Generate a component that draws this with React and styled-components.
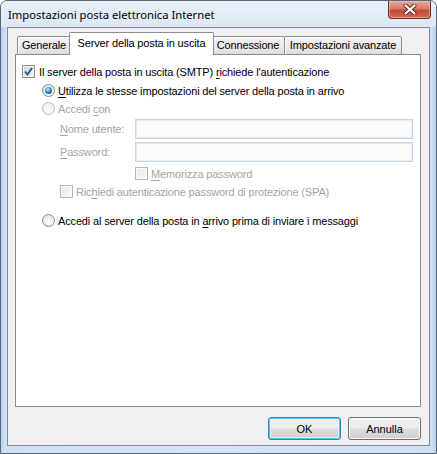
import React from 'react';
import styled, { createGlobalStyle } from 'styled-components';

const GlobalStyle = createGlobalStyle`
  html, body { margin: 0; padding: 0; background: #fff; }
  body { font-family: "Liberation Sans", Arial, sans-serif; font-size: 11px; }
`;

// title bar uses the Segoe-like face, dialog content the Tahoma-like one
const TITLE_FONT = `"Noto Sans", "Open Sans", sans-serif`;
const FONT = `"Liberation Sans", Arial, sans-serif`;

const Window = styled.div`
  width: 437px;
  height: 454px;
  box-sizing: border-box;
  border: 1px solid #56687a;
  border-radius: 7px 7px 0 0;
  background: linear-gradient(90deg, #b9d1ec 0px, #cfe0f2 4px, #d6e5f4 50%, #cfe0f2 calc(100% - 4px), #b9d1ec 100%);
  display: flex;
  flex-direction: column;
  overflow: hidden;
`;

const TitleBar = styled.div`
  height: 26px;
  display: flex;
  justify-content: space-between;
  background: linear-gradient(180deg, #e9f0f8 0%, #dde8f4 100%);
  padding-left: 7px;
  padding-right: 5px;
`;

const Title = styled.div`
  font-family: ${TITLE_FONT};
  font-size: 11.25px;
  color: #000;
  align-self: center;
`;

const CloseButton = styled.div`
  width: 43px;
  height: 18px;
  box-sizing: border-box;
  border: 1px solid #6e2a20;
  border-top: none;
  border-radius: 0 0 4px 4px;
  background: linear-gradient(180deg, #e6a99c 0%, #d77a68 45%, #c24a33 55%, #d4694f 100%);
  box-shadow: inset 0 0 0 1px rgba(255, 210, 200, 0.5);
  display: flex;
  align-items: center;
  justify-content: center;
`;

const Client = styled.div`
  flex: 1;
  margin: 0 6px 7px 6px;
  border: 1px solid #7d8a98;
  background: #f0f0f0;
  display: flex;
  flex-direction: column;
  padding: 5px 8px 5px 7px;
`;

const TabStrip = styled.div`
  display: flex;
  align-items: flex-end;
  height: 22px;
  padding-left: 2px;
  margin-bottom: -1px;
`;

const Tab = styled.div`
  box-sizing: border-box;
  width: ${p => p.$w}px;
  height: ${p => (p.$active ? '23px' : '19px')};
  margin: 0 ${p => (p.$active ? '-2px' : '0')} 0 ${p => (p.$active ? '-2px' : '-1px')};
  padding-top: ${p => (p.$active ? '4px' : '2px')};
  text-align: center;
  border: 1px solid #898c95;
  border-bottom: ${p => (p.$active ? 'none' : '1px solid #898c95')};
  border-radius: 2px 2px 0 0;
  background: ${p => (p.$active ? '#fff' : 'linear-gradient(180deg, #f4f4f4 0%, #ebebeb 50%, #dedede 100%)')};
  box-shadow: ${p => (p.$active ? 'none' : 'inset 1px 1px 0 #fff')};
  font-family: ${FONT};
  font-size: 11px;
  letter-spacing: -0.15px;
  color: #000;
  white-space: nowrap;
  position: relative;
  z-index: ${p => (p.$active ? 2 : 1)};
  &:first-child { margin-left: 0; }
`;

const Panel = styled.div`
  height: 351px;
  border: 1px solid #898c95;
  background: #fff;
  display: flex;
  flex-direction: column;
`;

const Row = styled.div`
  display: flex;
  align-items: center;
  height: ${p => p.$h || 13}px;
  margin-top: ${p => p.$mt}px;
  padding-left: ${p => p.$pl}px;
  gap: ${p => (p.$gap != null ? p.$gap : 4)}px;
`;

const Label = styled.span`
  font-family: ${FONT};
  font-size: 11px;
  letter-spacing: -0.15px;
  color: ${p => (p.$disabled ? '#a3a3a3' : '#000')};
  white-space: nowrap;
  width: ${p => (p.$w ? `${p.$w}px` : 'auto')};
  flex-shrink: 0;
  u { text-decoration: underline; text-underline-offset: 2px; }
`;

const Box = styled.span`
  width: 13px;
  height: 13px;
  box-sizing: border-box;
  flex-shrink: 0;
  border: 1px solid ${p => (p.$disabled ? '#b7b7b7' : '#8e8f8f')};
  background: ${p => (p.$disabled
    ? 'linear-gradient(135deg, #ebebeb 0%, #f7f7f7 100%)'
    : 'linear-gradient(135deg, #cbd3e0 0%, #f2f4f8 100%)')};
  box-shadow: inset 0 0 0 1px ${p => (p.$disabled ? '#fbfbfb' : '#f4f4f4')};
  display: flex;
  align-items: center;
  justify-content: center;
`;

const Radio = styled.span`
  width: 13px;
  height: 13px;
  box-sizing: border-box;
  flex-shrink: 0;
  border-radius: 50%;
  border: 1px solid ${p => (p.$disabled ? '#bcbcbc' : '#8a8a8a')};
  background: ${p => (p.$disabled
    ? 'radial-gradient(circle at 60% 65%, #fdfdfd 0%, #eaeaea 100%)'
    : 'radial-gradient(circle at 60% 65%, #ffffff 0%, #d8dde4 100%)')};
  display: flex;
  align-items: center;
  justify-content: center;
`;

const Dot = styled.span`
  width: 7px;
  height: 7px;
  border-radius: 50%;
  background: radial-gradient(circle at 40% 35%, #bfefff 0%, #4aa8e8 35%, #1b4f9e 75%, #0f2f66 100%);
`;

const Field = styled.div`
  width: 278px;
  height: 20px;
  box-sizing: border-box;
  border: 1px solid #c8d4e0;
  box-shadow: inset 0 0 0 1px #e6ecf2;
  background: #fcfcfc;
`;

const Footer = styled.div`
  flex: 1;
  display: flex;
  justify-content: flex-end;
  align-items: flex-end;
  gap: 7px;
`;

const Button = styled.div`
  width: 73px;
  height: 23px;
  box-sizing: border-box;
  border: 1px solid ${p => (p.$default ? '#3c7fb1' : '#707070')};
  border-radius: 3px;
  background: linear-gradient(180deg, #f2f2f2 0%, #ebebeb 48%, #dddddd 52%, #cfcfcf 100%);
  box-shadow: ${p => (p.$default
    ? 'inset 0 0 0 1px #48c8f0, inset 0 0 0 2px rgba(255,255,255,0.5)'
    : 'inset 0 0 0 1px rgba(255,255,255,0.8)')};
  display: flex;
  align-items: center;
  justify-content: center;
  font-family: ${FONT};
  font-size: 11px;
  color: #000;
`;

const Check = ({ disabled }) => (
  <Box $disabled={disabled}>
    {!disabled && (
      <svg width="9" height="9" viewBox="0 0 9 9">
        <path d="M1 4.5 L3.5 7.5 L8 1" fill="none" stroke="#2d4f8e" strokeWidth="1.8" />
      </svg>
    )}
  </Box>
);

const RadioBtn = ({ checked, disabled }) => (
  <Radio $disabled={disabled}>{checked && <Dot />}</Radio>
);

export default function App() {
  return (
    <>
      <GlobalStyle />
      <Window>
        <TitleBar>
          <Title>Impostazioni posta elettronica Internet</Title>
          <CloseButton>
            <svg width="14" height="11" viewBox="0 0 14 11">
              <path d="M2.5 1.5 L11.5 9.5 M11.5 1.5 L2.5 9.5" stroke="#5a2a22" strokeWidth="4" strokeLinecap="round" />
              <path d="M2.5 1.5 L11.5 9.5 M11.5 1.5 L2.5 9.5" stroke="#fff" strokeWidth="2.2" strokeLinecap="round" />
            </svg>
          </CloseButton>
        </TitleBar>
        <Client>
          <TabStrip>
            <Tab $w={54}>Generale</Tab>
            <Tab $active $w={145}>Server della posta in uscita</Tab>
            <Tab $w={74}>Connessione</Tab>
            <Tab $w={118}>Impostazioni avanzate</Tab>
          </TabStrip>
          <Panel>
            <Row $mt={10} $pl={6}>
              <Check />
              <Label>Il server della posta in uscita (SMTP) <u>r</u>ichiede l'autenticazione</Label>
            </Row>
            <Row $mt={6} $pl={26} $gap={3}>
              <RadioBtn checked />
              <Label><u>U</u>tilizza le stesse impostazioni del server della posta in arrivo</Label>
            </Row>
            <Row $mt={5} $pl={26} $gap={3}>
              <RadioBtn disabled />
              <Label $disabled>Accedi <u>c</u>on</Label>
            </Row>
            <Row $h={20} $mt={4} $pl={44} $gap={0}>
              <Label $disabled $w={75}><u>N</u>ome utente:</Label>
              <Field />
            </Row>
            <Row $h={20} $mt={3} $pl={44} $gap={0}>
              <Label $disabled $w={75}><u>P</u>assword:</Label>
              <Field />
            </Row>
            <Row $mt={5} $pl={119} $gap={3}>
              <Check disabled />
              <Label $disabled><u>M</u>emorizza password</Label>
            </Row>
            <Row $mt={5} $pl={44} $gap={3}>
              <Check disabled />
              <Label $disabled>Ric<u>h</u>iedi autenticazione password di protezione (SPA)</Label>
            </Row>
            <Row $mt={16} $pl={26} $gap={3}>
              <RadioBtn />
              <Label>Accedi al server della posta in <u>a</u>rrivo prima di inviare i messaggi</Label>
            </Row>
          </Panel>
          <Footer>
            <Button $default>OK</Button>
            <Button>Annulla</Button>
          </Footer>
        </Client>
      </Window>
    </>
  );
}
